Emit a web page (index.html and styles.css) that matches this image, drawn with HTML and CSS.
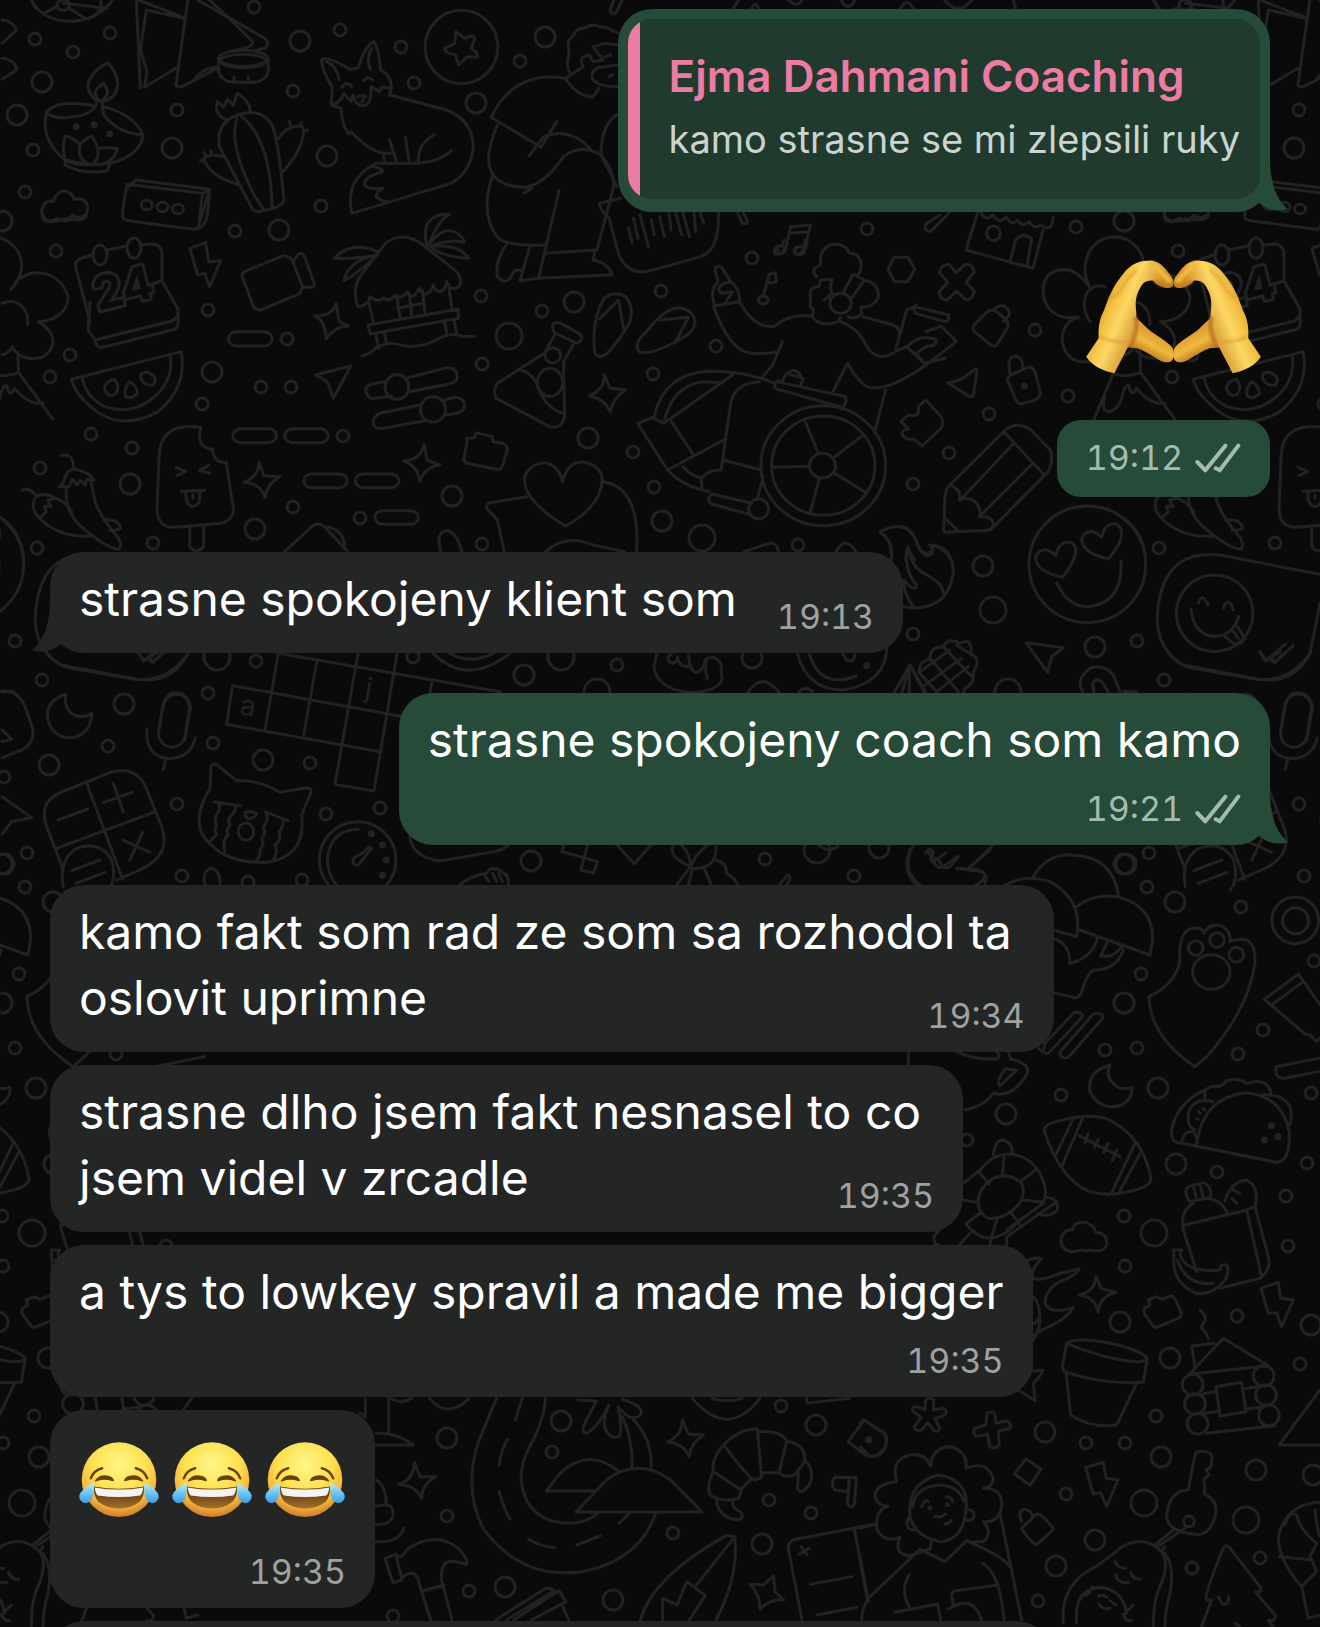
FILE: index.html
```html
<!DOCTYPE html>
<html lang="sk">
<head>
    <meta charset="UTF-8">
    <meta name="viewport" content="width=device-width, initial-scale=1.0">
    <title>Chat</title>
    <link rel="stylesheet" href="styles.css">
</head>
<body>

<div class="screen">

    <!-- Doodle wallpaper: one tile, repeated left and right -->
    <svg class="wallpaper" viewBox="0 0 1320 1627" preserveAspectRatio="xMinYMin slice" aria-hidden="true">
        <defs>
            <marker id="ringSmall" markerUnits="userSpaceOnUse" markerWidth="16" markerHeight="16" refX="8" refY="8"><circle cx="8" cy="8" r="6" fill="none" stroke="#222222" stroke-width="3"/></marker>
            <marker id="ringMedium" markerUnits="userSpaceOnUse" markerWidth="24" markerHeight="24" refX="12" refY="12"><circle cx="12" cy="12" r="10" fill="none" stroke="#222222" stroke-width="3"/></marker>
            <marker id="ringLarge" markerUnits="userSpaceOnUse" markerWidth="32" markerHeight="32" refX="16" refY="16"><circle cx="16" cy="16" r="13" fill="none" stroke="#222222" stroke-width="3"/></marker>
        </defs>
        <g id="tile">
            <!-- loose rings -->
            <polyline class="rings-small" points="35,39 73,52 110,33 254,7 340,30 401,47 414,83 520,61 293,91 177,110 33,150 25,192 56,251 235,231 321,206 481,296 208,310 287,339 70,355 50,377 261,387 291,387 202,404 91,434 132,448 343,436 40,468 293,507 360,518 153,543 37,548 482,364 542,311 482,544 752,258 661,291 716,346 653,374 633,452 654,487 798,545 913,484 949,453 989,414 1035,330 1068,396 867,229 1076,227 913,634 1137,641 42,680 256,661 208,693 213,743 108,746 177,804 27,853 182,876 248,882 25,887 310,763 326,814 380,808 413,657 302,880 4,777 617,665 765,859 854,876 119,907 1141,974 1105,1050 1137,1048 116,1054 141,1030 1061,1095 967,1140 95,1172 1124,1216 1125,1266 115,1316 1156,1416 1086,1443 1125,1443 1066,1494 70,1568 138,1558 1038,1601 552,1452 447,1516 469,1591 393,1616 673,1533 769,1500 811,1513 781,1406 189,1093 185,1163 164,1196 166,1246 178,1364 192,961"/>
            <polyline class="rings-medium" points="300,41 545,37 42,82 17,115 172,148 327,156 476,103 279,230 212,372 130,484 255,529 452,496 588,438 574,302 662,521 1124,221 983,566 1095,647 124,704 49,765 263,760 4,864 524,675 752,658 531,861 879,848 1124,864 53,902 1124,1003 36,1088 1006,1114 54,1164 1120,1322 48,1358 1045,1432 39,1457 134,1470 189,1325 191,1475 1095,1540 1056,1566 447,1438 561,1421 505,1587 613,1600 762,1544 816,1425"/>
            <polyline class="rings-large" points="509,336 702,538 993,610 1008,692 217,657 561,657 817,850 597,692 32,1233 22,1503 124,1520"/>

            <!-- lamp, cards, cactus, fox, star ball, kneeling figure, hut -->
            <g transform="scale(.3954 .3333)">
                <path d="M80 0C110 80 230 90 285 0M110 40L145 20M175 25L215 55M225 55Q260 40 255 0"/><circle cx="160" cy="15" r="16"/>
                <path d="M5 60Q30 60 42 90L5 130M5 175Q40 180 42 210L5 238"/>
                <path d="M355 265L345 10Q345 -5 360 5L465 52M365 262L445 205M370 30L355 150L372 215L365 262M370 30L465 55M475 0L445 255Q448 262 460 260L550 205M500 0L670 115Q685 130 670 145L640 152M530 0L575 50L635 120Q645 130 630 140L595 152M490 240Q510 205 550 200"/>
                <ellipse cx="615" cy="175" rx="62" ry="24"/><ellipse cx="615" cy="183" rx="58" ry="20"/><path d="M553 175V215Q560 245 590 247H645Q675 240 678 215V175M592 230V245M628 230V245"/>
                <path d="M272 188Q230 215 222 255Q225 295 255 305Q295 300 298 250Q295 215 272 188ZM262 250Q240 265 240 285Q255 320 272 282Q272 265 262 250Z"/>
                <path d="M245 305Q240 350 160 353Q120 350 118 335Q135 312 180 310Q215 312 240 318M118 335Q100 420 165 480Q280 515 340 455Q360 430 362 405Q300 400 262 345L258 305M262 320Q340 345 362 405M165 480V495Q210 525 270 512L278 495M165 480Q155 440 165 408Q190 415 202 435Q210 420 232 408Q245 430 247 447Q270 440 297 447Q290 480 262 492Q190 500 165 480M202 435Q195 480 225 492M247 447Q252 475 235 492"/>
                <path class="dots" d="M193 380h0M238 374h0M277 402h0"/>
                <path d="M570 358Q540 340 550 305L565 322L575 298L590 315L600 280Q635 305 632 338"/>
                <path d="M640 630L555 440Q545 370 600 345Q665 320 690 380Q705 430 718 600Q715 622 665 632Q650 638 640 630ZM600 350Q575 430 645 590L665 625M610 348Q685 420 688 620M705 415Q730 370 765 380Q775 410 745 470Q725 505 715 515M605 555Q530 530 515 475Q530 460 565 470M735 375L732 365M757 378L762 368M768 395L778 390M517 485L507 482M520 468L516 458M535 462L533 452"/>
                <path d="M320 565L345 540L530 568L500 685M320 565Q310 620 310 650Q312 660 325 662L490 688Q500 688 503 675L512 580L320 553M512 580L530 570L525 640Q520 680 500 685"/><circle cx="371" cy="615" r="14"/><circle cx="411" cy="621" r="14"/><circle cx="450" cy="627" r="14"/>
                <path d="M130 665Q100 655 107 625Q115 600 135 603Q145 570 165 573Q185 580 187 598Q215 590 222 620Q222 655 195 652Q185 650 182 645Q175 660 160 657Q145 665 130 665Z"/>
                <path d="M838 315L840 260Q815 215 813 180Q825 165 885 208L905 205Q925 135 945 125Q960 150 962 210Q990 225 990 265L985 285L1130 330Q1195 360 1197 440Q1190 520 1140 550L890 640Q870 540 950 490L1060 490Q1110 485 1142 452M825 185Q850 195 858 238M940 145Q925 175 937 208M838 315Q860 310 870 280L888 305L893 285Q900 320 920 317Q940 315 938 260L960 275L965 262L990 265M865 262Q875 240 890 260M920 242Q930 225 943 240M905 290Q915 285 925 288L915 305M838 315L862 325Q865 375 882 402L888 395Q930 450 970 460H990M985 420L1003 485M1025 412L1035 487M1098 405Q1055 430 1058 490M970 465L972 480M945 500Q975 510 965 517Q920 530 922 555Q935 570 968 565Q950 575 952 590Q965 605 980 605"/>
                <ellipse cx="1167" cy="141" rx="92" ry="110"/><path d="M1153 95L1175 115Q1205 100 1200 118L1192 145Q1215 165 1205 172L1182 170L1160 195L1152 165Q1120 155 1125 145L1150 130Z"/>
                <path d="M1475 200Q1460 170 1490 165L1500 185L1525 180L1500 140L1530 130L1560 135M1475 200L1430 235Q1460 290 1500 290L1515 265M1440 215Q1430 195 1440 160Q1430 120 1450 108Q1455 85 1475 85Q1500 70 1515 80Q1540 80 1545 90L1565 100M1497 235Q1495 200 1530 200L1560 195M1497 235Q1510 260 1560 260M1530 170L1545 165M1540 230L1550 225M1430 235Q1300 210 1242 352L1368 442L1408 365M1338 468L1375 410Q1440 380 1492 445M1258 375Q1190 560 1330 562Q1380 550 1425 470Q1470 430 1520 465Q1560 520 1550 570L1510 750L1378 760M1248 520Q1210 640 1260 715Q1290 740 1380 735M1325 580L1345 565M1414 570L1362 835L1315 842L1340 740M1362 835L1548 824Q1540 790 1500 780L1505 750M1280 735Q1250 790 1258 830Q1280 860 1295 825Q1300 805 1318 812"/>
                <path d="M1565 340Q1520 370 1520 465L1560 560"/>
                <path d="M480 745L520 728L528 785L558 782L530 860L518 820L500 825ZM618 815L715 768Q735 765 742 790L765 860Q762 885 740 890L660 930Q640 932 635 900L614 835Q610 820 618 815ZM742 785L755 762Q765 755 770 770L795 850Q795 865 785 862L768 860"/>
                <path d="M905 920Q890 870 910 830L975 730Q1020 690 1070 735L1155 815Q1175 850 1155 865Q1135 870 1130 845Q1125 875 1110 875Q1098 870 1096 855Q1090 880 1075 882Q1062 880 1060 865Q1050 890 1040 890Q1030 885 1030 875Q1015 900 995 888Q990 905 968 895Q960 910 935 890Q935 915 905 920ZM955 755Q890 720 845 775Q920 775 955 765Q880 780 870 842Q905 820 950 770M1080 740Q1060 640 1137 643Q1105 665 1085 735Q1110 690 1140 692Q1165 700 1175 725Q1120 720 1088 740Q1160 730 1185 775Q1120 770 1095 745"/>
            </g>

            <!-- calendar -->
            <path d="M90 322L76 268Q74 260 82 258L94 254M107 250L126 246M140 245L152 244Q162 244 162 255V281L178 309V324Q178 329 172 330L104 347Q96 349 95 340L88 330L90 302M95 340L172 321L178 316M162 281L152 284"/><ellipse cx="100" cy="255" rx="7" ry="10"/><ellipse cx="134" cy="248" rx="7" ry="10"/>
            <text class="date" x="98" y="311" transform="rotate(-14 98 311)">24</text>

            <!-- melon, sliders, flask, popsicle, chillies -->
            <g transform="translate(0 280) scale(.3954 .3333)">
                <path d="M180 298L458 215Q475 320 400 395Q300 460 225 375Q190 340 180 298ZM208 290Q215 350 265 380Q340 410 400 340Q440 290 430 225M290 298Q262 305 265 330Q275 355 292 342Q305 320 290 298ZM328 305Q310 330 318 350Q335 358 348 340Q345 315 328 305ZM355 288Q360 270 380 280Q400 295 388 315Q360 320 355 288Z"/>
                <path d="M850 70L858 125L882 138Q845 140 825 177Q822 120 795 107Q840 110 850 70ZM798 285L887 258L843 355L830 310Q825 300 798 285Z"/>
                <rect x="578" y="155" width="110" height="43" rx="20"/><rect x="589" y="446" width="110" height="42" rx="20"/><rect x="720" y="446" width="110" height="42" rx="20"/><rect x="768" y="582" width="110" height="41" rx="20"/><rect x="899" y="582" width="110" height="41" rx="20"/><rect x="948" y="692" width="110" height="41" rx="20"/>
                <path d="M973 305L940 312Q915 325 932 350Q940 358 950 355L990 348M1028 295L1130 263Q1158 262 1156 295Q1155 305 1135 312L1035 335M1062 375L960 400Q935 420 948 440Q955 448 970 445L1075 422M1125 360L1150 352Q1180 355 1173 388Q1165 400 1125 405"/><ellipse cx="1004" cy="321" rx="30" ry="37"/><ellipse cx="1095" cy="388" rx="32" ry="38"/>
                <path d="M932 65L945 130M1135 20L1143 85M930 135L1158 88L1160 115L937 162ZM950 162L958 205M972 160L978 190M1125 125L1130 165M1148 120L1155 160M915 228Q935 222 945 210Q975 180 1020 197Q1070 205 1110 175Q1145 155 1170 170L1200 168M1003 45L1012 115M1068 30L1075 100M1035 40L1042 110M1005 85L1070 70"/>
                <path d="M1397 143Q1395 125 1415 128L1465 160Q1480 175 1460 190L1402 158ZM1405 160L1378 218L1258 310Q1245 330 1255 355L1390 440Q1420 450 1428 410L1425 245L1452 190M1312 270Q1345 275 1360 320Q1380 385 1425 400"/><ellipse cx="1398" cy="226" rx="20" ry="23"/><ellipse cx="1391" cy="307" rx="32" ry="42"/>
                <path d="M508 442Q400 425 402 540L397 690Q400 745 445 742L560 730Q600 715 588 670L572 547Q540 550 538 508Q495 505 508 442ZM480 740V800Q495 825 515 800V740M445 562L470 575L447 587M528 555L505 572L530 580M458 634L518 631M470 636Q468 675 488 680Q510 675 505 634M488 645V655"/>
                <path d="M655 545L667 587L708 590Q675 612 670 653Q660 610 617 607Q655 590 655 545ZM1073 493L1080 540L1113 555Q1075 560 1062 603Q1055 555 1021 543Q1065 540 1073 493Z"/>
                <path d="M155 527Q185 515 187 568Q225 575 238 600L220 598L215 615L203 600L195 615L183 597L175 620L150 620Q160 615 165 590Q170 570 187 568M168 620Q160 700 215 750Q270 805 300 808Q310 800 300 775Q240 690 238 650L230 605M57 630Q75 620 92 650Q115 635 140 655L120 660L130 680L112 678L117 695L100 715Q80 690 85 665Q90 645 105 643M142 655Q165 665 182 697M100 715Q150 775 230 768M262 720Q300 715 305 745Q290 755 278 750"/>
                <path d="M1180 475L1200 473L1205 458L1245 470L1247 485L1272 490Q1285 500 1283 510L1270 560Q1265 572 1255 568L1182 550Q1170 545 1174 530L1182 480"/>
                <path d="M1430 738Q1320 660 1327 590Q1340 550 1380 548Q1415 560 1423 605Q1435 545 1475 546Q1520 555 1523 600Q1520 680 1430 738ZM1332 650L1235 670Q1225 675 1235 690L1258 720L1275 815M1525 605Q1620 620 1610 815M1380 815Q1430 760 1500 795L1580 815"/>
                <path d="M720 815L790 738Q805 725 820 740L880 815M825 740Q865 745 872 795M1115 815Q1100 755 1130 752Q1155 755 1168 815"/>
                <path d="M5 715Q55 760 60 840"/>
            </g>

            <!-- flower and mountain -->
            <g transform="translate(1040 230) scale(.3333)">
                <path d="M148 170C115 100 150 22 225 20C300 25 345 110 279 178M293 155C350 105 430 130 450 200C450 245 410 275 361 275C405 300 425 345 376 380C345 392 295 385 284 350Q270 372 252 375M148 170Q90 90 25 135C-10 180 10 275 115 262C60 275 50 350 95 385Q120 402 160 393M150 275C110 215 145 155 195 170M252 220C300 200 335 240 329 285M299 365L302 428M220 430Q260 445 302 428L405 568M220 430L162 568M195 500Q180 545 210 545Q240 535 250 485Q265 450 270 480Q278 500 290 475Q330 525 375 520"/>
            </g>

            <!-- voice note, music notes, kiosk -->
            <g transform="translate(600 0) scale(.4592 .3333)">
                <path d="M45 595L0 610Q-5 620 20 655L40 760Q60 830 110 812L220 770Q260 750 258 640M62 685L70 728M73 655L83 715M87 645L106 742M112 660L118 705M130 650L140 710M150 640L155 690M165 640L178 705M180 635L195 710M205 640L208 695M218 640L226 670M300 640L310 670Q325 675 320 660L312 640"/>
                <path d="M405 740L415 680L458 675L445 755M412 700L455 695"/><ellipse cx="392" cy="750" rx="12" ry="12"/><ellipse cx="434" cy="752" rx="12" ry="12"/>
                <path d="M822 640L797 750L943 805L965 690M830 640Q840 665 855 645Q870 675 885 650Q895 680 910 660Q920 685 935 665Q945 690 960 675Q985 700 987 650M893 785L905 720Q920 695 940 715L930 798M712 670L740 645M712 670Q700 690 720 695L760 640"/><ellipse cx="857" cy="700" rx="15" ry="22"/>
                <path d="M1230 640Q1225 665 1245 665L1262 655Q1275 668 1290 658Q1325 665 1325 640"/>
                <path d="M30 0L22 30Q25 45 35 40L48 0M290 25L302 0M330 25Q338 0 345 25M410 0Q430 25 440 0M525 0Q540 40 555 0M655 25Q668 -10 682 25M750 0Q780 50 810 0M905 25L900 0M1205 0L1215 25M1275 10L1370 25"/>
            </g>

            <!-- flip-flops, wheelchair rider, pencil -->
            <g transform="translate(480 240) scale(.3827 .3333)">
                <path d="M300 340Q290 240 325 175Q350 150 380 170Q405 200 390 250Q370 290 345 325Q315 365 300 340ZM312 237L362 180L375 265M415 335Q400 310 435 275Q480 205 520 203Q560 210 562 250Q560 275 520 300Q440 350 415 335ZM470 240L545 232L510 308"/>
                <path d="M740 170L755 105Q770 95 772 100L775 125L750 130M795 0L790 15M850 0L845 20"/><ellipse cx="740" cy="180" rx="13" ry="12"/>
                <path d="M780 30Q765 30 770 40Q790 50 802 15M825 30Q815 40 830 43Q850 35 855 5"/>
                <path d="M1082 52H1118L1136 88L1118 125H1083L1066 88ZM1225 73L1245 98L1267 73Q1285 70 1292 95L1270 127L1292 155Q1285 180 1270 180L1245 153L1222 180Q1200 180 1200 155L1222 127L1200 98Q1205 75 1225 73Z"/>
                <path d="M610 198L678 185Q680 145 655 125L630 80Q612 75 615 95L622 125Q600 150 612 192M655 125Q610 135 630 160L660 155L640 190M678 185Q720 270 770 258Q810 220 868 228Q875 250 905 252Q940 250 942 232M610 198Q650 325 700 338Q740 345 780 335M790 305L765 375L735 415M868 228L872 210L863 200V165Q860 140 885 140L890 120L920 118L915 145L920 160L900 180M880 110Q860 90 890 75Q885 20 925 12Q960 15 965 40Q1000 40 995 90L985 110M948 160L975 103L1005 120L970 175M1005 120Q1045 130 1040 175Q1025 205 995 200L998 220Q980 240 962 230"/><ellipse cx="942" cy="190" rx="28" ry="30"/>
                <path d="M942 245Q990 265 1010 320Q1040 370 1085 335L1115 320Q1150 280 1190 298Q1200 315 1165 320L1140 340L1160 370L1215 355M1000 230L1080 255Q1100 265 1095 285M1085 335L1115 210L1135 200L1225 225Q1225 245 1215 245L1138 220Q1130 205 1140 195M1165 275L1205 258L1245 305L1165 375L1115 320M1165 375Q1060 460 1010 440Q985 420 960 370L920 460M1060 450L1030 580"/>
                <path d="M455 530Q480 400 600 393Q700 395 770 430M480 550L660 405M480 550Q500 440 580 425L635 428M480 550L450 533L412 550L490 690L640 598M500 545L558 645M490 690Q530 740 600 755M730 425Q665 430 655 490L630 690Q590 690 578 720L580 745M530 680Q560 715 580 712M635 660L735 690M740 710L725 775M775 425L955 470Q960 495 945 502L770 445Q770 425 780 422M790 425L800 400L845 415L838 435M805 400Q820 380 838 405M605 762L710 790M605 762Q590 780 605 792L710 825"/><ellipse cx="728" cy="807" rx="26" ry="30"/><ellipse cx="897" cy="677" rx="163" ry="180"/><ellipse cx="897" cy="677" rx="135" ry="149"/><ellipse cx="895" cy="677" rx="34" ry="37"/>
                <path d="M765 682L861 679M848 540L885 642M925 652L998 588M926 700L1007 757M887 714L863 817"/>
                <path d="M1350 215L1375 240Q1385 255 1375 270L1350 315Q1345 322 1335 315L1292 275Q1285 265 1295 250L1325 215Q1335 208 1350 215ZM1342 212Q1350 195 1370 198Q1390 215 1380 230L1368 245M1388 405L1430 383Q1445 380 1450 395L1465 460Q1460 478 1445 482L1415 492Q1405 492 1400 480L1380 425Q1375 410 1388 405ZM1385 400Q1375 350 1400 348Q1420 355 1418 385"/><path class="dots" d="M1422 437h0"/>
                <path d="M1222 428Q1245 425 1262 415L1293 388Q1300 385 1298 400L1290 462Q1287 475 1277 468ZM1100 545L1120 525Q1150 535 1145 500L1165 480L1205 530Q1215 555 1200 570L1155 618L1135 598Q1105 600 1103 580Q1105 565 1120 567Z"/>
                <path d="M1228 735L1370 573Q1400 540 1440 570L1490 630Q1500 660 1485 695L1340 863Q1330 875 1300 872L1215 877Q1210 875 1212 860L1215 770Q1218 745 1228 735ZM1368 575L1475 705M1395 610L1255 780M1445 670L1305 830M1228 735Q1260 750 1252 780Q1300 760 1310 830Q1350 830 1338 865M1215 835L1250 873"/>
                <path d="M325 405L340 445L380 450Q350 470 340 515Q325 475 285 467Q325 450 325 405Z"/>
                <path d="M1075 960Q1080 900 1045 877Q1080 850 1115 865Q1140 890 1150 930Q1165 950 1185 930L1175 915Q1215 920 1230 960M1112 960L1118 925L1135 960M690 935L755 910Q775 905 780 935M930 935Q955 885 982 935"/>
            </g>

            <!-- flame, heart-eyes face, tongue sticker, corn -->
            <g transform="translate(900 380) scale(.3333)">
                <path d="M0 440Q35 440 55 500Q75 540 98 520L92 495Q160 500 160 580Q145 670 70 682Q0 690 -20 660M40 680Q10 640 12 600Q45 640 50 615Q15 580 20 510M25 500Q30 560 80 585Q130 610 130 640"/>
                <circle cx="562" cy="553" r="175"/><path d="M488 592Q405 575 407 530Q430 490 468 528Q475 480 515 488Q550 510 488 592ZM625 537Q545 520 545 475Q565 435 605 472Q615 425 650 432Q690 460 625 537ZM470 608Q505 685 570 680Q670 665 663 543"/>
                <path d="M1260 583L960 525Q820 510 785 630Q740 790 850 855L1060 895Q1180 920 1230 820L1260 670"/><circle cx="944" cy="700" r="115"/><path d="M873 687Q880 765 945 770Q1000 765 1016 710M895 670Q905 635 925 675M970 685Q985 645 1000 690M975 770L1000 790Q1020 800 1035 775L1012 740M1000 755L1015 775M1080 815L1097 843L1155 793M1117 838L1125 847L1180 797"/>
                <path d="M378 788L490 803L455 830L443 878ZM660 935L640 885Q610 850 570 865Q535 890 542 920L548 935M625 935L605 905Q585 890 578 915L582 935M670 935H710"/>
                <path d="M0 910L30 855L72 935M28 860V935M60 875Q50 850 90 835Q90 800 130 800Q145 770 180 790Q215 770 213 820Q245 840 220 875Q225 910 195 925L190 940M60 875L150 810M75 915L185 835M110 935L205 860M90 835L175 935M130 800L215 890M55 875L110 935M170 795L215 825"/>
                <path d="M1180 940Q1155 950 1145 1040M1180 940Q1225 930 1238 980L1220 1080"/>
            </g>

            <!-- moon, mic, crossword, calculator, crying cat, compass -->
            <g transform="translate(0 640) scale(.3333)">
                <path d="M198 162Q130 185 145 245Q165 300 225 292Q275 275 275 220Q240 240 215 220Q190 200 198 162ZM6 153Q55 150 75 200L98 265Q105 310 65 330L6 353M6 270L35 297L6 305M6 470L95 533L35 545L6 583"/>
                <rect x="482" y="162" width="80" height="160" rx="40" transform="rotate(9 522 242)"/><path d="M441 267Q435 345 500 355Q570 360 586 293M497 358L490 388"/>
                <path d="M835 40L1500 155M697 137L1210 230M680 253L1140 335M1005 433L1122 453M835 40L795 270M697 137L680 253M950 68L910 290M1075 35L1005 433M1192 35L1122 453M1295 130L1290 160"/>
                <path d="M200 450L330 398Q400 375 435 435L485 560Q515 640 430 685L350 720M200 450Q110 480 140 560L190 690M260 430L368 718M170 625L460 517M175 540L263 507M310 488L397 457M340 430L370 515M367 600L450 637M428 577L390 660M215 692L300 660M228 730L315 697M190 740Q175 660 230 625Q300 600 335 660Q350 720 325 750"/>
                <path d="M630 445L633 380Q640 365 655 378L710 422Q780 420 840 457L920 443Q940 445 930 465L905 525Q920 650 800 667Q690 670 640 620Q560 560 630 445ZM643 485L722 498M795 515L865 543M655 490Q665 505 652 520Q640 540 650 555Q640 575 650 585Q630 600 630 608M705 498Q710 515 695 525Q680 540 690 555Q675 570 685 585Q665 600 675 635M800 520Q805 545 790 560Q800 580 785 595Q795 615 780 630Q780 650 770 660M850 540Q850 560 837 575Q845 600 825 615Q835 635 822 655M735 518Q750 512 770 520Q765 535 745 538Q735 530 735 518Z"/><ellipse cx="738" cy="575" rx="23" ry="26"/>
                <circle cx="1073" cy="660" r="115"/><path d="M1075 568Q990 570 982 660Q985 710 1010 735M1115 625Q1105 615 1095 635L1060 655Q1055 680 1075 675L1115 625"/><path class="dots" d="M1114 581h0M1147 615h0M1159 660h0M1147 706h0"/>
                <path d="M615 735Q605 690 635 685Q660 690 660 735M140 40Q170 80 230 88L400 117Q500 130 565 40M415 40L433 62L475 35M450 62L457 67L490 38M1300 40Q1400 140 1530 40M1350 40Q1410 75 1480 40"/>
            </g>
            <text class="letter" x="239" y="714" transform="rotate(9 239 714)">a</text>
            <text class="letter" x="364" y="697" transform="rotate(9 364 697)">j</text>

            <!-- bits between the bubbles -->
            <g transform="translate(380 640) scale(.3954 .3333)">
                <path d="M740 38Q715 60 740 70Q755 65 752 50Q755 80 780 80Q785 65 780 45Q785 95 800 98Q820 90 822 60Q845 40 862 70L865 120Q850 155 790 158Q700 150 693 80L700 38M825 60Q820 90 828 115M1055 38Q1080 150 1170 150Q1280 130 1282 20M1085 38Q1110 150 1205 108M1170 40L1180 60Q1200 70 1200 45M930 158Q950 120 975 125Q1000 140 1010 158M1060 155Q1075 135 1095 155M1300 158L1340 75L1380 155M1340 75L1320 158"/><path class="dots" d="M1231 77h0"/>
                <path d="M75 580Q75 650 150 663L290 635Q310 630 325 615M465 615L460 635L550 665L540 700L508 690L525 615M600 615L643 672L685 615M785 680Q730 650 740 620M790 685Q850 690 850 620M762 615Q785 640 785 680Q800 640 828 615M785 680L750 735M790 685L780 735M820 685L838 735M850 660Q880 670 875 700Q895 710 905 735M1010 735L1030 705Q1045 710 1025 740M1110 615Q1130 640 1158 620M1350 615Q1310 680 1360 740M1380 640Q1390 615 1400 640Q1385 660 1400 665L1430 640M1400 665Q1410 690 1425 680L1460 650M1460 685L1515 690Q1550 710 1500 740M1490 685L1550 615M200 735Q235 705 270 700Q275 680 290 688Q305 685 310 700Q325 700 325 735M265 705L275 725M285 700L295 725M300 700L310 725"/>
            </g>

            <!-- mushrooms, paw, taco, football, life ring, bottle -->
            <g transform="translate(860 850) scale(.3333)">
                <path d="M520 80Q560 10 635 15Q760 20 775 135M435 105Q500 70 570 95Q670 150 650 260L580 240M650 170Q700 130 770 140Q880 165 878 270L870 315L660 240M580 265Q630 280 630 340Q700 320 712 265M740 280L722 318Q760 325 785 290M790 300Q770 360 700 360Q680 375 670 410Q660 450 640 442L580 428M150 0Q130 70 180 105M205 0Q210 30 235 25M235 25Q250 70 275 45L295 20M290 55L365 65Q385 75 375 100M325 55L390 0"/>
                <path d="M867 440Q950 400 960 330Q955 240 1000 235Q1025 230 1032 250Q1050 215 1090 230Q1115 250 1110 275Q1190 245 1185 340Q1165 480 1040 620L1005 650Q870 560 867 440Z"/><circle cx="1007" cy="294" r="22"/><circle cx="1071" cy="270" r="22"/><circle cx="1129" cy="314" r="22"/><ellipse cx="1054" cy="366" rx="56" ry="52"/>
                <circle cx="1306" cy="211" r="70"/><circle cx="1307" cy="212" r="39"/>
                <path d="M1213 448L1315 372L1420 520L1370 575L1350 555L1335 552ZM1235 465L1330 395M1250 650L1400 620M1250 650Q1240 685 1275 685L1400 660"/>
                <path d="M550 605L555 580L640 490Q665 480 668 500L565 610Q555 615 535 595M605 600L700 492Q730 485 728 505L625 622Q600 630 600 605M145 605V645M290 605Q340 630 410 627Q425 620 410 605M445 605L452 627Q510 640 502 670Q460 745 400 730Q370 770 315 780M435 657L470 660L420 707Q405 700 435 657"/>
                <path d="M750 645Q680 665 690 725Q720 785 785 765Q820 745 815 712Q780 725 760 700Q735 680 750 645Z"/>
                <path d="M552 840Q555 825 580 818Q680 785 745 808Q850 860 873 985Q875 1000 850 1012Q760 1045 690 1025Q600 990 552 840ZM640 805L585 920M670 800L605 950M825 880L755 1028M842 908L780 1022M657 857L780 920M685 850L675 880M715 868L703 892M745 880L730 908M770 900L757 932"/>
                <path d="M965 880Q930 880 935 840Q950 760 1035 720L1060 708Q1085 715 1100 692Q1130 680 1160 700Q1225 680 1235 735M1205 735Q1270 730 1290 770Q1300 810 1285 830M965 880L1250 937Q1290 935 1288 850Q1270 740 1160 728Q1030 740 1010 880M1060 755Q1000 740 985 790Q980 830 1005 840M965 880Q970 840 1000 845L1012 865M1035 720V745M1015 785L1020 790M1010 805L1015 808M1030 775L1035 780"/><path class="dots" d="M1234 827h0M1213 869h0M1254 860h0"/>
                <path d="M310 1000L360 960Q400 910 450 912Q530 920 555 1010Q560 1040 550 1060L440 1140M355 1060Q350 1020 400 985Q450 965 485 1000Q500 1040 470 1070Q430 1110 385 1105Q355 1090 355 1060ZM400 915Q405 870 430 870Q460 880 457 912M432 920L427 975M527 960L480 995M550 1057L487 1050M450 1085L485 1130M355 965L388 1003M310 1050L350 1057M320 1120L360 1090M555 1042Q600 1045 592 1080Q570 1105 532 1090"/>
                <path d="M970 1140Q960 1080 1000 1060L985 1050Q970 1020 985 1010L1030 998Q1045 1000 1052 1025Q1055 1045 1040 1045L990 1055M1000 1010L1010 1045M1020 1005L1030 1042M1040 1045Q1090 1050 1103 1095M975 1125L1160 1080L1185 1070Q1200 1010 1160 990Q1110 995 1095 1055M1120 1020L1140 1030M1115 1045L1130 1060M1160 1080L1205 1280M1185 1070L1225 1220Q1235 1260 1200 1285L1080 1315M970 1140L1010 1265"/>
                <path d="M940 1200H965L960 1215Q980 1270 1080 1260Q1080 1240 1100 1245Q1110 1260 1095 1290Q1060 1335 1010 1330Q935 1300 942 1220ZM952 1230Q980 1310 1060 1300"/>
            </g>

            <!-- cloud, pot, cabin, key, portrait, avocado, tree -->
            <g transform="translate(860 1200) scale(.3333)">
                <path d="M635 155Q600 150 603 115Q615 85 637 90Q640 65 675 67Q705 75 707 97Q745 100 740 135Q730 160 690 150Q680 155 670 150ZM708 228L723 265L768 278Q720 285 715 337Q705 290 657 285Q705 275 708 228ZM852 325L870 315L865 300L890 290L905 298L935 287L945 295L965 340Q965 350 955 355L890 382Q880 382 875 372L852 340ZM1203 265L1255 247L1262 295L1300 300L1265 380L1250 338L1225 340ZM677 803L730 787L738 835L774 840L740 920L722 878L700 882Z"/>
                <path d="M495 185Q520 170 545 175Q510 210 520 235Q540 245 600 220L657 207Q650 225 600 245Q555 270 555 310Q570 345 640 322Q620 360 545 390Q525 400 512 415M512 285Q540 300 540 360Q535 400 520 420M512 370Q525 375 535 355M222 110L240 85M222 110Q220 135 240 137M298 135L330 100M390 140L392 120L410 62M320 75Q390 160 480 60M440 137V110L590 5M505 515L548 510Q550 520 520 550L525 602L475 570"/>
                <path d="M620 430Q650 410 750 430Q840 450 862 475Q860 485 830 485Q740 480 620 430L607 500L613 515Q730 555 850 547L862 475M618 515L632 645Q690 685 770 675L830 550"/>
                <path d="M988 523L1090 415L1225 497ZM1005 500L995 438L1063 430M1020 330Q1040 345 1035 365Q1015 380 1035 395L1045 415M1030 582L1070 573M1150 567L1190 560M1035 640L1080 633M1155 627L1200 622M1040 700L1245 677M1068 560L1145 547L1158 635L1080 648Z"/><circle cx="998" cy="554" r="31"/><circle cx="1005" cy="612" r="31"/><circle cx="1013" cy="671" r="31"/><circle cx="1211" cy="528" r="31"/><circle cx="1218" cy="585" r="31"/><circle cx="1227" cy="646" r="31"/>
                <path d="M1380 570L1258 735H1380M197 600Q210 590 222 600L220 630L250 625Q270 640 245 650L225 655L240 685Q235 700 220 690L203 668L185 690Q165 695 163 680L183 652L160 635Q150 620 170 620L195 630ZM380 640Q400 630 405 645L408 670L440 662Q455 670 450 685L415 693L418 735Q405 750 390 740L382 702L350 710Q335 700 345 685L378 675ZM0 670L12 660L75 700Q85 720 75 745Q55 780 25 765L0 740M498 776L543 808L510 856L463 822ZM485 985L530 942Q545 940 580 985Q580 992 530 1034Q520 1035 487 990ZM485 965Q470 930 495 928Q520 935 515 950"/><path class="dots" d="M26 718h0"/>
                <path d="M1010 755Q1050 750 1057 770L1053 800L1038 810L1048 825L1030 840L1035 860L1032 882Q1075 900 1067 945Q1050 1010 1005 1003Q920 995 920 945Q930 870 985 870L1005 765ZM975 985L900 1035M940 990L885 1035L905 1055L915 1040"/><circle cx="987" cy="964" r="16"/>
                <path d="M110 845Q90 780 150 765Q200 760 212 800Q215 740 275 740Q325 760 318 805Q380 780 400 835Q400 860 370 865Q430 865 425 920Q415 970 370 965Q400 1000 370 1025L340 1025M110 845Q45 850 45 890Q55 920 85 918Q45 930 50 985Q70 1030 120 1012Q100 1060 145 1068L210 1048L215 1020M150 950Q140 850 235 825Q330 840 318 930Q310 1020 240 1025Q165 1010 150 950M158 920Q165 860 240 855Q300 860 312 905M185 920Q195 895 205 905M258 890Q275 890 278 905M225 950Q240 955 258 942M255 972Q270 970 275 960M150 950Q135 965 145 985Q155 995 170 985M318 928Q345 930 342 950Q335 965 315 960M180 1048L255 1085L320 1022Q430 1070 450 1100M180 1048L30 1190Q5 1220 5 1260M420 940L485 1260M368 1090Q420 1120 432 1260M147 1125Q120 1170 147 1220M105 1237L232 1212L242 1260M265 1228Q340 1180 365 1260M280 1215L275 1185Q275 1175 290 1172L415 1155M0 985L45 973M0 1070L25 1205"/><path class="dots-fine" d="M210 924h0M262 914h0"/>
                <path d="M610 1270Q600 1170 680 1115Q720 1095 780 1045Q850 1000 905 1055Q930 1090 900 1160Q880 1200 880 1280M915 1060Q945 1100 930 1180Q915 1230 915 1280M765 1085Q775 1105 797 1105M812 1118Q820 1140 842 1137M767 1125Q770 1150 807 1148M650 1270Q640 1170 720 1162Q790 1170 800 1240M665 1185Q690 1190 697 1160M790 1245L820 1215M790 1245Q800 1265 815 1262M715 1190Q725 1180 740 1192M718 1212Q725 1230 750 1225M750 1202L768 1215"/>
                <path d="M1040 1200Q1030 1190 1090 1045Q1098 1030 1110 1045L1200 1160Q1210 1180 1185 1175L1245 1245Q1250 1265 1225 1262L1240 1280M1040 1200H1055L1025 1280M1075 1190L1085 1210Q1110 1220 1105 1190M1125 1270L1140 1280"/>
                <path d="M1380 907Q1280 910 1255 1010Q1255 1080 1325 1160L1345 1255L1380 1245M1310 945Q1320 990 1370 1030M1258 1070L1355 1080M1370 1030L1350 1070L1370 1115L1325 1160M1275 975Q1290 930 1310 945M1365 930Q1370 980 1380 1010"/>
            </g>

            <!-- road, sand dunes, croissant, hammer, surfboard, book -->
            <g transform="translate(360 1380) scale(.3571 .3333)">
                <path d="M382 55L330 190Q290 330 345 445Q450 600 620 575Q780 545 828 400M520 55Q515 110 490 170Q445 250 452 310Q470 430 590 430Q640 425 665 400M455 55L435 120M413 178Q395 210 390 255M390 335Q400 380 420 417M472 477Q505 500 545 503M608 495L673 467M725 430L755 400"/>
                <path d="M522 333L560 280Q640 200 725 275M522 333H655M605 396L690 300Q780 230 870 300L958 396ZM610 60L662 63L625 140Q620 165 640 157Q670 135 697 75Q670 140 700 165Q715 180 728 165Q735 130 722 80Q760 130 785 105Q800 80 735 58M735 110Q765 180 762 265M765 118Q820 180 815 265"/>
                <path d="M903 120L920 163L962 165Q925 190 922 230Q905 190 862 185Q900 170 903 120ZM152 247L168 290L212 290Q175 310 172 355Q155 315 108 313Q150 300 152 247ZM1092 613L1130 615L1158 588L1162 635L1187 660Q1150 655 1120 688Q1120 640 1092 613Z"/>
                <path d="M990 275Q980 240 1022 190Q1060 150 1105 147Q1115 145 1113 155Q1180 150 1195 183Q1250 195 1245 240Q1275 270 1260 310Q1235 350 1225 325L1228 280M1113 155L1125 290Q1110 305 1095 295Q1060 255 1022 200M1195 183L1173 280Q1195 295 1215 285Q1240 260 1245 240M1125 278H1173M990 275L1068 330M990 275Q970 310 980 345Q1020 370 1060 355L1070 325L1095 297M998 355Q1000 410 1055 420Q1080 415 1065 395Q1040 385 1043 360"/>
                <path d="M1330 292L1390 293L1385 370Q1375 390 1365 372L1370 295M1330 292Q1315 310 1330 330L1365 335M1412 120L1460 155Q1485 175 1465 210Q1440 240 1415 225L1367 185Z"/><path class="dots" d="M1425 180h0"/>
                <path d="M70 535L100 523L118 600L92 608ZM103 528Q120 535 130 510Q210 450 275 505Q305 540 298 553L275 547Q225 530 228 600L258 720M120 590Q160 560 168 620L198 720M175 633L235 615M45 435L75 430Q100 415 90 385Q85 370 45 378M45 300Q75 320 73 375M45 485Q110 490 123 443M80 55V160M15 55V110L0 100M45 160Q100 155 150 195H45M195 55Q245 120 305 55M85 55Q115 75 145 55"/>
                <path d="M785 720Q820 590 1020 470Q1045 460 1050 480Q1060 590 997 720M1050 470L942 615M847 720V655L888 675L915 605L967 647L922 720M930 55Q1030 180 1120 55M985 55Q1030 70 1070 55M1250 55L1252 70L1370 55M380 720L515 628Q530 620 545 632L410 720M480 720L577 665L557 632L430 720M565 675L585 720"/>
                <path d="M1200 510Q1195 485 1220 478L1445 432M1200 510L1238 720M1385 450L1422 665M1235 500L1252 525M1258 505L1230 522M1262 613L1378 590M1280 705L1392 682"/>
            </g>
        </g>
        <use href="#tile" x="1122"/>
        <use href="#tile" x="-1122"/>
    </svg>

    <!-- Shared drawings -->
    <svg class="sprites" aria-hidden="true">
        <defs>
            <radialGradient id="face" cx=".5" cy=".3" r=".72"><stop offset="0" stop-color="#fff68a"/><stop offset=".5" stop-color="#fde14f"/><stop offset=".78" stop-color="#f4b63c"/><stop offset="1" stop-color="#c9742a"/></radialGradient>
            <linearGradient id="mouth" x2="0" y2="1"><stop offset=".3" stop-color="#6b3f12"/><stop offset="1" stop-color="#a3702a"/></linearGradient>
            <linearGradient id="tear" x2="0" y2="1"><stop offset="0" stop-color="#c4ecfb"/><stop offset=".5" stop-color="#6ec6f2"/><stop offset="1" stop-color="#3b9be8"/></linearGradient>
            <linearGradient id="skin" gradientUnits="userSpaceOnUse" x1="170" y1="230" x2="310" y2="290"><stop offset="0" stop-color="#dd9a2c"/><stop offset=".25" stop-color="#f3bf42"/><stop offset=".5" stop-color="#fcd864"/><stop offset="1" stop-color="#d08a26"/></linearGradient>
            <linearGradient id="thumb" gradientUnits="userSpaceOnUse" x1="350" y1="310" x2="315" y2="375"><stop offset="0" stop-color="#e09c2d"/><stop offset=".5" stop-color="#efb940"/><stop offset="1" stop-color="#bd761e"/></linearGradient>
            <filter id="soft" x="-30%" y="-30%" width="160%" height="160%"><feGaussianBlur stdDeviation="5"/></filter>
        </defs>
        <symbol id="checks" viewBox="0 0 138 90">
            <path d="M7 57L31 82L91 8M62 76L74 82L130 8" fill="none" stroke="currentColor" stroke-width="12" stroke-linecap="round" stroke-linejoin="round"/>
        </symbol>
        <symbol id="tail" viewBox="0 0 48 54">
            <path d="M30 0C30 24 36 42 48 51C36 55 26 51 18 44Z" fill="currentColor"/>
        </symbol>
        <symbol id="joy" viewBox="0 0 238 238">
            <circle cx="119" cy="118" r="111" fill="url(#face)"/>
            <g id="joyHalf">
                <path d="M35 114Q44 90 69 84" fill="none" stroke="#6b4108" stroke-width="7" stroke-linecap="round"/>
                <path d="M47 121Q58 105 77 105Q98 106 104 119Q104 124 98 122Q76 114 54 122Q46 126 47 121Z" fill="#6b3d08"/>
            </g>
            <use href="#joyHalf" transform="translate(238 0) scale(-1 1)"/>
            <path d="M45 138Q119 152 193 138Q196 165 180 184Q155 204 119 204Q83 204 58 184Q42 165 45 138Z" fill="url(#mouth)"/>
            <path d="M47 141Q119 154 191 141Q190 158 182 165Q119 174 56 165Q48 158 47 141Z" fill="#f4f3f1"/>
            <path id="drop" d="M43 127Q46 165 37 178Q24 194 8 184Q-4 172 4 158Q16 140 43 127Z" fill="url(#tear)"/>
            <use href="#drop" transform="translate(238 0) scale(-1 1)"/>
        </symbol>
        <symbol id="heartHands" viewBox="137 88 524 342">
            <g id="hand">
                <path d="M270 262C290 258 300 274 322 294C348 316 378 330 393 348C402 360 402 376 396 387C388 399 370 396 356 388C335 376 312 360 290 353L255 350Z" fill="url(#thumb)"/>
                <path d="M137 378L175 322C172 290 178 262 190 240C205 200 215 172 240 140C262 108 285 90 325 90C352 89 370 105 385 128C396 143 401 150 398 162C394 172 382 174 370 170C355 165 345 158 338 150C325 149 312 152 305 162C290 185 284 205 286 230C292 280 284 320 262 350C250 375 235 400 222 428C185 420 155 405 137 378Z" fill="url(#skin)"/>
                <path d="M330 96C350 112 366 128 386 150" fill="none" stroke="#f0bd45" stroke-width="14" stroke-linecap="round" filter="url(#soft)"/>
                <path d="M345 152Q368 172 392 164" fill="none" stroke="#b97520" stroke-width="8" stroke-linecap="round" filter="url(#soft)"/>
                <path d="M178 318Q215 336 262 335" fill="none" stroke="#d9982d" stroke-width="6" filter="url(#soft)"/>
                <path d="M285 260Q296 300 270 345" fill="none" stroke="#b97520" stroke-width="11" filter="url(#soft)"/>
                <path d="M205 205Q235 195 250 165Q262 138 290 118" fill="none" stroke="#d9982d" stroke-width="5" filter="url(#soft)"/>
            </g>
            <use href="#hand" transform="translate(798 0) scale(-1 1)"/>
        </symbol>
    </svg>

    <main class="chat">
        <article class="bubble sent quote-bubble">
            <blockquote class="quote">
                <cite>Ejma Dahmani Coaching</cite>
                <p>kamo strasne se mi zlepsili ruky</p>
            </blockquote>
            <svg class="tail" aria-hidden="true"><use href="#tail"/></svg>
        </article>

        <svg class="big-emoji" role="img" aria-label="🫶"><use href="#heartHands"/></svg>

        <div class="bubble sent stamp">
            <div class="meta"><time>19:12</time><svg class="checks" aria-hidden="true"><use href="#checks"/></svg></div>
        </div>

        <article class="bubble received single">
            <p>strasne spokojeny klient som</p>
            <div class="meta"><time>19:13</time></div>
            <svg class="tail" aria-hidden="true"><use href="#tail"/></svg>
        </article>

        <article class="bubble sent stacked">
            <p>strasne spokojeny coach som kamo</p>
            <div class="meta"><time>19:21</time><svg class="checks" aria-hidden="true"><use href="#checks"/></svg></div>
            <svg class="tail" aria-hidden="true"><use href="#tail"/></svg>
        </article>

        <article class="bubble received wrapped">
            <p>kamo fakt som rad ze som sa rozhodol ta<br>oslovit uprimne</p>
            <div class="meta"><time>19:34</time></div>
        </article>

        <article class="bubble received wrapped">
            <p>strasne dlho jsem fakt nesnasel to co<br>jsem videl v zrcadle</p>
            <div class="meta"><time>19:35</time></div>
        </article>

        <article class="bubble received stacked">
            <p>a tys to lowkey spravil a made me bigger</p>
            <div class="meta"><time>19:35</time></div>
        </article>

        <article class="bubble received stacked">
            <div class="emoji-row" role="img" aria-label="😂😂😂">
                <svg><use href="#joy"/></svg>
                <svg><use href="#joy"/></svg>
                <svg><use href="#joy"/></svg>
            </div>
            <div class="meta"><time>19:35</time></div>
        </article>

        <article class="bubble received upcoming"></article>
    </main>
</div>

</body>
</html>
```
FILE: styles.css
```css
* {
    box-sizing: border-box;
}

body {
    margin: 0;
    background: #0a0a0a;
    color: #ffffff;
    font-family: Inter, Roboto, "Liberation Sans", sans-serif;
}

/* Wallpaper and chat share one grid cell */
.screen {
    display: grid;
    height: 100vh;
    overflow: hidden;
}

.wallpaper,
.chat {
    grid-area: 1 / 1;
    min-height: 0;
}

.sprites {
    position: absolute;
    width: 0;
    height: 0;
}

/* Wallpaper lines */
.wallpaper {
    width: 100%;
    height: 100%;
    fill: none;
    stroke: #222222;
    stroke-width: 3;
    stroke-linecap: round;
    stroke-linejoin: round;
}

.wallpaper path,
.wallpaper ellipse,
.wallpaper circle,
.wallpaper rect {
    vector-effect: non-scaling-stroke;
}

.wallpaper .dots {
    stroke-width: 7;
}

.wallpaper .dots-fine {
    stroke-width: 5;
}

.wallpaper polyline {
    stroke: none;
}

.rings-small {
    marker: url(#ringSmall);
}

.rings-medium {
    marker: url(#ringMedium);
}

.rings-large {
    marker: url(#ringLarge);
}

/* Hollow digits: wide outline with a dark core */
.date {
    fill: #0a0a0a;
    stroke: #222222;
    stroke-width: 6;
    paint-order: stroke;
    font-size: 46px;
    font-weight: 700;
}

.letter {
    fill: #222222;
    stroke: none;
    font-size: 28px;
}

/* Messages */
.chat {
    display: flex;
    flex-direction: column;
    align-items: flex-start;
    gap: 13px;
    padding: 9px 50px 0;
    overflow: hidden;
}

.bubble {
    position: relative;
    flex: none;
    padding: 14px 29px;
    border-radius: 34px;
}

.bubble p {
    margin: 0;
    font-size: 48px;
    line-height: 66px;
    white-space: nowrap;
}

.sent {
    align-self: flex-end;
    background: #274b39;
    color: #ffffff;
}

.received {
    background: #242626;
}

.meta {
    display: flex;
    align-items: center;
    justify-content: flex-end;
    gap: 12px;
    color: #a0a1a1;
    font-size: 34px;
    font-variant-numeric: tabular-nums;
    line-height: 44px;
}

.sent .meta {
    color: #a6bbb0;
}

.checks {
    width: 46px;
    height: 30px;
}

/* Tail at the bottom corner */
.tail {
    position: absolute;
    right: -18px;
    bottom: 0;
    width: 48px;
    height: 54px;
    color: #274b39;
}

.received .tail {
    right: auto;
    left: -18px;
    color: #242626;
    transform: scaleX(-1);
}

/* Quoted message */
.quote-bubble {
    padding: 10px 10px 13px;
}

.quote {
    margin: 0;
    padding: 29px 20px 25px 41px;
    border-radius: 24px;
    background: linear-gradient(to right, #ee7ba3 12px, #203a2d 12px);
}

.quote cite {
    display: block;
    color: #ee7ba3;
    font-size: 44px;
    font-style: normal;
    font-weight: 600;
    line-height: 56px;
}

.quote p {
    color: #cbd4cf;
    font-size: 38px;
    line-height: 70px;
}

.big-emoji {
    flex: none;
    align-self: flex-end;
    width: 175px;
    height: 114px;
    margin: 35px 9px 33px 0;
}

.stamp {
    padding: 16px 29px 17px;
    border-radius: 24px;
}

.stamp + .bubble {
    margin-top: 42px;
}

.single {
    display: flex;
    align-items: flex-end;
    gap: 40px;
    margin-bottom: 27px;
    padding-bottom: 21px;
}

.single .meta {
    margin-bottom: -7px;
}

.stacked.sent {
    margin-bottom: 27px;
}

.stacked {
    padding-bottom: 14px;
}

.stacked .meta {
    margin-top: 14px;
}

/* Text and time share a cell, the time sits in the lower corner */
.wrapped {
    display: grid;
    padding-bottom: 14px;
}

.wrapped p,
.wrapped .meta {
    grid-area: 1 / 1;
}

.wrapped p {
    padding: 0 13px 7px 0;
}

.wrapped .meta {
    align-self: end;
}

.emoji-row {
    display: flex;
    gap: 13px;
    padding: 16px 1px 16px 0;
}

.emoji-row svg {
    width: 80px;
    height: 80px;
}

.upcoming {
    width: 82%;
    height: 160px;
}
```
